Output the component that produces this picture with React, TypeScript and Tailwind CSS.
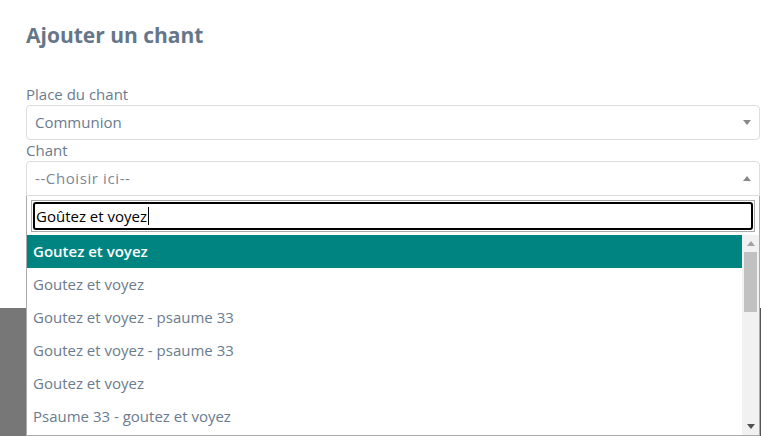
import React from "react";

const options = [
  "Goutez et voyez",
  "Goutez et voyez",
  "Goutez et voyez - psaume 33",
  "Goutez et voyez - psaume 33",
  "Goutez et voyez",
  "Psaume 33 - goutez et voyez",
];

function Tri({ up, color = "#888" }: { up?: boolean; color?: string }) {
  return (
    <svg width="8" height="5" viewBox="0 0 8 5" className="block">
      {up ? <polygon points="0,5 8,5 4,0" fill={color} /> : <polygon points="0,0 8,0 4,5" fill={color} />}
    </svg>
  );
}

export default function App() {
  return (
    <div className="relative w-[761px] h-[436px] overflow-hidden bg-[#777777] font-['Open_Sans',sans-serif]">
      <div className="absolute right-0 top-[308px] bottom-0 w-[2px] bg-[#555]" />
      <div className="h-[308px] bg-white pl-[26px] pt-[21px]">
        <h1 className="text-[21px] leading-[29px] font-bold text-[#66768a]">Ajouter un chant</h1>
        <div className="mt-[34px] text-[15px] leading-[20px] text-[#6b7b8e]">Place du chant</div>
        <div className="mt-[1px] flex h-[35px] w-[734px] items-center justify-between rounded-[4px] border border-[#dcdcdc] pl-[8px] pr-[8px]">
          <span className="text-[15px] text-[#6b7b8e]">Communion</span>
          <Tri />
        </div>
        <div className="text-[15px] leading-[21px] text-[#6b7b8e]">Chant</div>
        <div className="flex h-[35px] w-[734px] items-center justify-between rounded-t-[4px] border border-[#dcdcdc] pl-[8px] pr-[8px]">
          <span className="text-[15px] tracking-[0.6px] text-[#7b8898]">--Choisir ici--</span>
          <Tri up />
        </div>
      </div>
      <div className="absolute left-[26px] top-[196px] w-[734px] h-[240px] flex flex-col border border-t-0 border-[#aaa] bg-white">
        <div className="px-[4px] pt-[4px] pb-[3px]">
          <div className="border border-[#aaa] p-[1px]">
            <div className="flex h-[28px] items-center rounded-[3px] border-2 border-black pl-[1px]">
              <span className="text-[15px] text-black">Goûtez et voyez</span>
              <span className="ml-[1px] h-[18px] w-[1px] bg-black" />
            </div>
          </div>
        </div>
        <div className="flex flex-1 min-h-0">
          <div className="flex-1 flex flex-col">
            {options.map((o, i) => (
              <div
                key={i}
                className={
                  i === 0
                    ? "h-[33px] shrink-0 flex items-center pl-[6px] bg-[#008482] text-white text-[15px] font-semibold"
                    : "h-[33px] shrink-0 flex items-center pl-[6px] text-[#6b7b8e] text-[15px]"
                }
              >
                {o}
              </div>
            ))}
          </div>
          <div className="w-[17px] bg-[#f1f1f1] flex flex-col items-center">
            <div className="h-[17px] flex items-center justify-center">
              <Tri up color="#a3a3a3" />
            </div>
            <div className="w-[13px] h-[60px] bg-[#c1c1c1]" />
            <div className="flex-1" />
            <div className="h-[17px] flex items-center justify-center">
              <Tri color="#505050" />
            </div>
          </div>
        </div>
      </div>
    </div>
  );
}
